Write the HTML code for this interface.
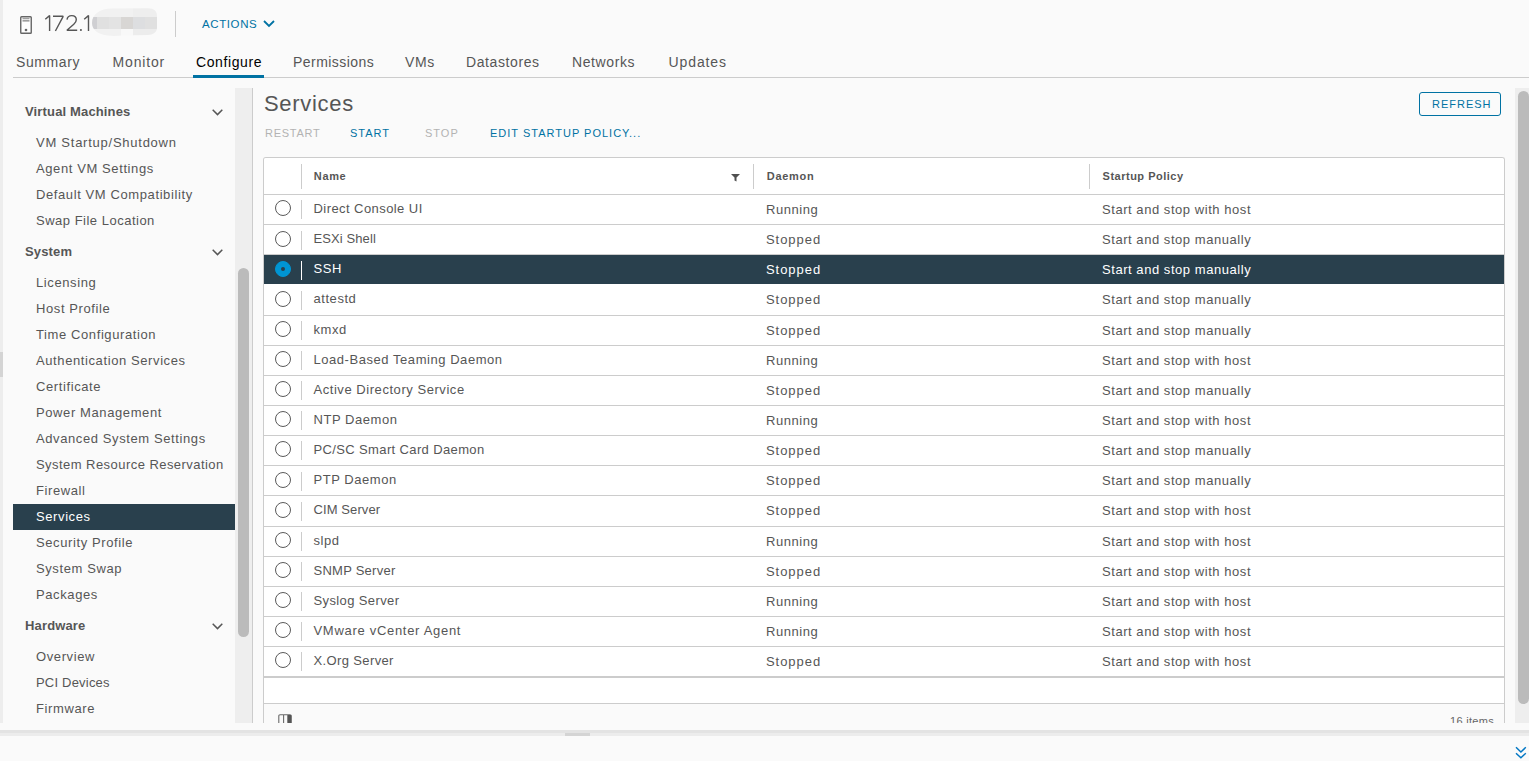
<!DOCTYPE html>
<html><head><meta charset="utf-8">
<style>
*{box-sizing:border-box;margin:0;padding:0}
html,body{width:1529px;height:761px;overflow:hidden;background:#fafafa;font-family:"Liberation Sans",sans-serif;color:#565656}
.abs{position:absolute}
.t{position:absolute;white-space:nowrap;line-height:1}
#strip{left:0;top:0;width:3px;height:730px;background:#ededed}
.tab{position:absolute;top:55px;font-size:14px;letter-spacing:0.6px;color:#565656;white-space:nowrap;line-height:14px}
.nav{position:absolute;left:13px;width:222px;height:26px;font-size:13px;letter-spacing:0.6px;line-height:28px;padding-left:23px;color:#565656;white-space:nowrap}
.navh{position:absolute;left:13px;width:222px;height:26px;font-size:13px;font-weight:bold;letter-spacing:0.15px;line-height:28px;padding-left:12px;color:#565656;white-space:nowrap}
.chev{position:absolute;left:198.5px;top:10.5px;letter-spacing:0}
.row{position:absolute;left:264px;width:1240px;height:30px;border-bottom:1px solid #ccc;background:#fff}
.row .rad{position:absolute;left:11px;top:6px;width:16px;height:16px;border:1px solid #5a5a5a;border-radius:50%;background:#fff}
.row .sep{position:absolute;left:37px;top:5px;width:1px;height:19px;background:#ccc}
.row .c1,.row .c2,.row .c3{position:absolute;top:0;line-height:30px;font-size:13px;letter-spacing:0.55px;color:#565656;white-space:nowrap}
.row .c1{left:49.5px;margin-top:-1px}.row .c2{left:502px}.row .c3{left:838px}
.row.sel{background:#29404d;border-bottom-color:#fff}
.row.sel .c1,.row.sel .c2,.row.sel .c3{color:#fff}
.row.sel .rad{background:#0095d3;border-color:#0095d3}
.row.sel .rad:after{content:"";position:absolute;left:5px;top:5px;width:4px;height:4px;border-radius:50%;background:#29404d}
.row.sel .sep{background:#fff}
.btn{position:absolute;font-size:11px;letter-spacing:1px;white-space:nowrap;line-height:1}
</style></head><body>
<div id="strip" class="abs"></div>
<div class="abs" style="left:0;top:352px;width:3px;height:25px;background:#d4d4d4"></div>

<!-- header -->
<svg class="abs" style="left:20px;top:16px" width="12" height="18" viewBox="0 0 12 18">
 <rect x="0.75" y="0.75" width="10.5" height="16.5" rx="0.8" fill="#fff" stroke="#666" stroke-width="1.4"/>
 <rect x="2.5" y="2.3" width="7" height="0.9" fill="#777"/>
 <rect x="2.5" y="4.2" width="7" height="1.3" fill="#888"/>
 <circle cx="6" cy="14" r="1.3" fill="#666"/>
</svg>
<svg class="abs" style="left:40px;top:10px" width="52" height="26" viewBox="40 10 52 26">
 <g fill="none" stroke="#565656" stroke-width="1.4" stroke-linejoin="bevel">
  <path d="M45.3 19.3 L49.6 15.6 V31"/>
  <path d="M53 16.3 H63.2 L55.4 31"/>
  <path d="M67 19.6 C67.4 16.9 69.3 15.6 71.7 15.6 C74.5 15.6 76.3 17.4 76.3 19.8 C76.3 21.6 75.3 22.9 73.8 24.2 L66.9 30.2 H77.2"/>
  <path d="M84.2 19.3 L88.5 15.6 V31"/>
 </g>
 <circle cx="80.9" cy="30" r="1.05" fill="#565656"/>
</svg>
<svg class="abs" style="left:90px;top:6px" width="70" height="32" viewBox="0 0 70 32">
 <defs><clipPath id="bc"><path d="M2 17 C2 8 10 2.5 22 2.5 L58 2.2 C64 2.2 67 5 67 10 L67 22 C67 26 63 29 58 29 L32 29.5 C26 30 22 30 18 29.5 C8 28.5 2 24 2 17 Z"/></clipPath>
 <filter id="bf"><feGaussianBlur stdDeviation="0.5"/></filter></defs>
 <g clip-path="url(#bc)" filter="url(#bf)">
  <rect x="0" y="0" width="70" height="32" fill="#f1f1f1"/>
  <rect x="43" y="0" width="27" height="11" fill="#eeeeee"/>
  <rect x="31" y="23" width="12" height="9" fill="#f8f8f8"/>
  <rect x="43" y="23" width="27" height="9" fill="#ececec"/>
  <rect x="0" y="11" width="7" height="12" fill="#cfcfd2"/>
  <rect x="7" y="11" width="12" height="12" fill="#e0e0e0"/>
  <rect x="19" y="11" width="12" height="12" fill="#e3e3e3"/>
  <rect x="31" y="11" width="12" height="12" fill="#d8d6d4"/>
  <rect x="43" y="11" width="12" height="12" fill="#dddee0"/>
  <rect x="55" y="11" width="15" height="12" fill="#e0e0e0"/>
 </g>
</svg>
<div class="abs" style="left:175px;top:11px;width:1px;height:26px;background:#ccc"></div>
<div class="t" style="left:202px;top:19px;font-size:11.5px;letter-spacing:0.6px;color:#0072a3">ACTIONS</div>
<svg class="abs" style="left:263px;top:20px" width="12" height="8" viewBox="0 0 12 8"><path d="M1 1 L6 6 L11 1" fill="none" stroke="#0072a3" stroke-width="1.8"/></svg>

<!-- tabs -->
<div class="tab" style="left:16px">Summary</div>
<div class="tab" style="left:112.5px;letter-spacing:0.85px">Monitor</div>
<div class="tab" style="left:196px;color:#000">Configure</div>
<div class="tab" style="left:293px;letter-spacing:0.45px">Permissions</div>
<div class="tab" style="left:405px">VMs</div>
<div class="tab" style="left:466px">Datastores</div>
<div class="tab" style="left:572px">Networks</div>
<div class="tab" style="left:668.5px;letter-spacing:0.9px">Updates</div>
<div class="abs" style="left:13px;top:77px;width:1516px;height:1px;background:#ccc"></div>
<div class="abs" style="left:193px;top:75px;width:71px;height:3px;background:#0072a3"></div>

<!-- left nav -->
<div class="navh" style="top:98px">Virtual Machines<svg class="chev" width="11" height="7" viewBox="0 0 11 7"><path d="M0.7 0.8 L5.5 5.6 L10.3 0.8" fill="none" stroke="#565656" stroke-width="1.5"/></svg></div>
<div class="nav" style="top:129px;letter-spacing:0.75px;">VM Startup/Shutdown</div>
<div class="nav" style="top:155px;">Agent VM Settings</div>
<div class="nav" style="top:181px;">Default VM Compatibility</div>
<div class="nav" style="top:207px;letter-spacing:0.5px;">Swap File Location</div>
<div class="navh" style="top:238px">System<svg class="chev" width="11" height="7" viewBox="0 0 11 7"><path d="M0.7 0.8 L5.5 5.6 L10.3 0.8" fill="none" stroke="#565656" stroke-width="1.5"/></svg></div>
<div class="nav" style="top:269px;">Licensing</div>
<div class="nav" style="top:295px;">Host Profile</div>
<div class="nav" style="top:321px;">Time Configuration</div>
<div class="nav" style="top:347px;">Authentication Services</div>
<div class="nav" style="top:373px;">Certificate</div>
<div class="nav" style="top:399px;">Power Management</div>
<div class="nav" style="top:425px;">Advanced System Settings</div>
<div class="nav" style="top:451px;letter-spacing:0.45px;">System Resource Reservation</div>
<div class="nav" style="top:477px;">Firewall</div>
<div class="nav" style="top:504px;background:#29404d;color:#fff;line-height:26px;">Services</div>
<div class="nav" style="top:529px;">Security Profile</div>
<div class="nav" style="top:555px;">System Swap</div>
<div class="nav" style="top:581px;">Packages</div>
<div class="navh" style="top:612px">Hardware<svg class="chev" width="11" height="7" viewBox="0 0 11 7"><path d="M0.7 0.8 L5.5 5.6 L10.3 0.8" fill="none" stroke="#565656" stroke-width="1.5"/></svg></div>
<div class="nav" style="top:643px;">Overview</div>
<div class="nav" style="top:669px;letter-spacing:0.2px;">PCI Devices</div>
<div class="nav" style="top:695px;">Firmware</div>

<!-- nav scrollbar -->
<div class="abs" style="left:235px;top:88px;width:17px;height:635px;background:#eeeeee"></div>
<div class="abs" style="left:238px;top:268px;width:11px;height:369px;background:#bbb;border-radius:6px"></div>
<div class="abs" style="left:252px;top:88px;width:1px;height:635px;background:#ccc"></div>

<!-- content -->
<div class="t" style="left:264px;top:93px;font-size:22px;letter-spacing:0.7px;color:#565656">Services</div>
<div class="btn" style="left:265px;top:128px;letter-spacing:0.75px;color:#b3b3b3">RESTART</div>
<div class="btn" style="left:350px;top:128px;color:#0072a3">START</div>
<div class="btn" style="left:425px;top:128px;color:#b3b3b3">STOP</div>
<div class="btn" style="left:490px;top:128px;color:#0072a3">EDIT STARTUP POLICY...</div>
<div class="abs" style="left:1419px;top:92px;width:82px;height:24px;border:1px solid #0072a3;border-radius:3px"></div>
<div class="btn" style="left:1432px;top:99px;color:#0072a3">REFRESH</div>

<!-- table -->
<div class="abs" style="left:263px;top:157px;width:1242px;height:566px;border:1px solid #ccc;border-bottom:none;border-radius:3px 3px 0 0;background:#fafafa;overflow:hidden">
 <div class="abs" style="left:0;top:0;width:1240px;height:37px;background:#fff;border-bottom:1px solid #ccc"></div>
</div>
<div class="abs" style="left:301px;top:164px;width:1px;height:25px;background:#ccc"></div>
<div class="t" style="left:313.8px;top:171px;font-size:11px;font-weight:bold;letter-spacing:0.65px;color:#565656">Name</div>
<svg class="abs" style="left:730.5px;top:174px" width="9" height="8" viewBox="0 0 9 8"><path d="M0 0 H9 L5.5 3.5 V7.5 L3.5 6.5 V3.5 Z" fill="#505050"/></svg>
<div class="abs" style="left:753px;top:164px;width:1px;height:25px;background:#ccc"></div>
<div class="t" style="left:766.8px;top:171px;font-size:11px;font-weight:bold;letter-spacing:0.7px;color:#565656">Daemon</div>
<div class="abs" style="left:1089px;top:164px;width:1px;height:25px;background:#ccc"></div>
<div class="t" style="left:1102.6px;top:171px;font-size:11px;font-weight:bold;letter-spacing:0.5px;color:#565656">Startup Policy</div>
<div class="row" style="top:195px;height:30px"><div class="rad" style="margin-top:-0.60px"></div><div class="sep" style="margin-top:0.40px"></div><div class="c1" style="letter-spacing:0.43px">Direct Console UI</div><div class="c2" >Running</div><div class="c3" >Start and stop with host</div></div>
<div class="row" style="top:225px;height:30px"><div class="rad" style="margin-top:-0.47px"></div><div class="sep" style="margin-top:0.53px"></div><div class="c1" style="letter-spacing:0.1px">ESXi Shell</div><div class="c2" style="letter-spacing:0.95px">Stopped</div><div class="c3" >Start and stop manually</div></div>
<div class="row sel" style="top:255px;height:30px"><div class="rad" style="margin-top:-0.34px"></div><div class="sep" style="margin-top:0.66px"></div><div class="c1" >SSH</div><div class="c2" style="letter-spacing:0.95px">Stopped</div><div class="c3" >Start and stop manually</div></div>
<div class="row" style="top:285px;height:31px"><div class="rad" style="margin-top:-0.21px"></div><div class="sep" style="margin-top:0.79px"></div><div class="c1" >attestd</div><div class="c2" style="letter-spacing:0.95px">Stopped</div><div class="c3" >Start and stop manually</div></div>
<div class="row" style="top:316px;height:30px"><div class="rad" style="margin-top:-1.08px"></div><div class="sep" style="margin-top:-0.08px"></div><div class="c1" >kmxd</div><div class="c2" style="letter-spacing:0.95px">Stopped</div><div class="c3" >Start and stop manually</div></div>
<div class="row" style="top:346px;height:30px"><div class="rad" style="margin-top:-0.95px"></div><div class="sep" style="margin-top:0.05px"></div><div class="c1" >Load-Based Teaming Daemon</div><div class="c2" >Running</div><div class="c3" >Start and stop with host</div></div>
<div class="row" style="top:376px;height:30px"><div class="rad" style="margin-top:-0.82px"></div><div class="sep" style="margin-top:0.18px"></div><div class="c1" >Active Directory Service</div><div class="c2" style="letter-spacing:0.95px">Stopped</div><div class="c3" >Start and stop manually</div></div>
<div class="row" style="top:406px;height:30px"><div class="rad" style="margin-top:-0.69px"></div><div class="sep" style="margin-top:0.31px"></div><div class="c1" >NTP Daemon</div><div class="c2" >Running</div><div class="c3" >Start and stop with host</div></div>
<div class="row" style="top:436px;height:30px"><div class="rad" style="margin-top:-0.56px"></div><div class="sep" style="margin-top:0.44px"></div><div class="c1" style="letter-spacing:0.37px">PC/SC Smart Card Daemon</div><div class="c2" style="letter-spacing:0.95px">Stopped</div><div class="c3" >Start and stop manually</div></div>
<div class="row" style="top:466px;height:30px"><div class="rad" style="margin-top:-0.43px"></div><div class="sep" style="margin-top:0.57px"></div><div class="c1" >PTP Daemon</div><div class="c2" style="letter-spacing:0.95px">Stopped</div><div class="c3" >Start and stop manually</div></div>
<div class="row" style="top:496px;height:31px"><div class="rad" style="margin-top:-0.30px"></div><div class="sep" style="margin-top:0.70px"></div><div class="c1" style="letter-spacing:0.1px">CIM Server</div><div class="c2" style="letter-spacing:0.95px">Stopped</div><div class="c3" >Start and stop with host</div></div>
<div class="row" style="top:527px;height:30px"><div class="rad" style="margin-top:-1.17px"></div><div class="sep" style="margin-top:-0.17px"></div><div class="c1" >slpd</div><div class="c2" >Running</div><div class="c3" >Start and stop with host</div></div>
<div class="row" style="top:557px;height:30px"><div class="rad" style="margin-top:-1.04px"></div><div class="sep" style="margin-top:-0.04px"></div><div class="c1" style="letter-spacing:0.25px">SNMP Server</div><div class="c2" style="letter-spacing:0.95px">Stopped</div><div class="c3" >Start and stop with host</div></div>
<div class="row" style="top:587px;height:30px"><div class="rad" style="margin-top:-0.91px"></div><div class="sep" style="margin-top:0.09px"></div><div class="c1" style="letter-spacing:0.38px">Syslog Server</div><div class="c2" >Running</div><div class="c3" >Start and stop with host</div></div>
<div class="row" style="top:617px;height:30px"><div class="rad" style="margin-top:-0.78px"></div><div class="sep" style="margin-top:0.22px"></div><div class="c1" style="letter-spacing:0.7px">VMware vCenter Agent</div><div class="c2" >Running</div><div class="c3" >Start and stop with host</div></div>
<div class="row" style="top:647px;height:30px"><div class="rad" style="margin-top:-0.65px"></div><div class="sep" style="margin-top:0.35px"></div><div class="c1" style="letter-spacing:0.37px">X.Org Server</div><div class="c2" style="letter-spacing:0.95px">Stopped</div><div class="c3" >Start and stop with host</div></div>
<div class="abs" style="left:264px;top:677px;width:1240px;height:1px;background:#ccc"></div>
<div class="abs" style="left:264px;top:678px;width:1240px;height:25px;background:#fff"></div>
<div class="abs" style="left:264px;top:703px;width:1240px;height:1px;background:#ccc"></div>
<svg class="abs" style="left:278px;top:714px" width="14" height="9" viewBox="0 0 14 9"><path d="M0.8 9 V2 Q0.8 0.8 2 0.8 H12 Q13.2 0.8 13.2 2 V9 M5.6 0.8 V9" fill="none" stroke="#6a6a6a" stroke-width="1.1"/><rect x="9.3" y="1" width="4" height="8" rx="0.5" fill="#555"/></svg>
<div class="abs" style="left:1440px;top:704px;width:64px;height:19px;overflow:hidden"><div class="t" style="left:10px;top:12px;font-size:11px;letter-spacing:0.3px;color:#666">16 items</div></div>

<!-- page scrollbar -->
<div class="abs" style="left:1515px;top:88px;width:14px;height:635px;background:#eee"></div>
<div class="abs" style="left:1518px;top:91px;width:11px;height:613px;background:#bbb;border-radius:6px"></div>

<!-- bottom -->
<div class="abs" style="left:0;top:723px;width:1529px;height:7px;background:#fafafa"></div>
<div class="abs" style="left:0;top:730px;width:1529px;height:3px;background:#e3e3e3"></div>
<div class="abs" style="left:0;top:733px;width:1529px;height:3px;background:#ececec"></div>
<div class="abs" style="left:565px;top:733px;width:25px;height:3px;background:#d4d4d4"></div>
<svg class="abs" style="left:1515px;top:745px" width="13" height="15" viewBox="0 0 13 15"><path d="M1 2.3 L5.9 7 L10.8 2.3 M1 8.2 L5.9 12.7 L10.8 8.2" fill="none" stroke="#0277c4" stroke-width="1.5"/></svg>
</body></html>
